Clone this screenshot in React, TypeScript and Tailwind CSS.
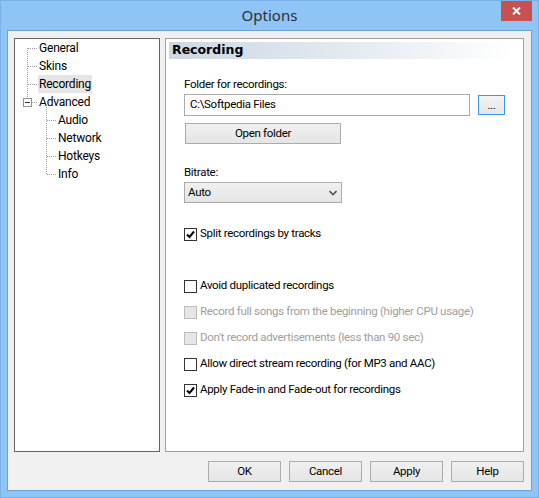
import React from 'react';

const ui = { fontFamily: 'Roboto, "Noto Sans", sans-serif', letterSpacing: '-0.2px' };
const body = { fontSize: '11.5px', letterSpacing: '-0.3px' };

const TreeLines = () => (
    <svg className="absolute left-0 top-0 pointer-events-none" width="144" height="160">
        <g stroke="#a0a0a0" strokeWidth="1" strokeDasharray="1 1" fill="none">
            <line x1="12.5" y1="9" x2="12.5" y2="59" />
            <line x1="13" y1="9.5" x2="23" y2="9.5" />
            <line x1="13" y1="27.5" x2="23" y2="27.5" />
            <line x1="13" y1="45.5" x2="23" y2="45.5" />
            <line x1="17" y1="63.5" x2="23" y2="63.5" />
            <line x1="31.5" y1="68" x2="31.5" y2="135" />
            <line x1="32" y1="81.5" x2="42" y2="81.5" />
            <line x1="32" y1="99.5" x2="42" y2="99.5" />
            <line x1="32" y1="117.5" x2="42" y2="117.5" />
            <line x1="32" y1="135.5" x2="42" y2="135.5" />
        </g>
        <rect x="8.5" y="59.5" width="8" height="8" fill="#fff" stroke="#919191" />
        <line x1="10" y1="63.5" x2="15" y2="63.5" stroke="#333" />
    </svg>
);

const TreeItem = ({ label, sub, selected }: { label: string; sub?: boolean; selected?: boolean }) => (
    <div className={`h-[18px] flex items-center ${sub ? 'pl-[42px]' : 'pl-[23px]'}`}>
        <span className={`px-[1px] h-[18px] leading-[18px] ${selected ? 'bg-[#e5e5e5]' : ''}`}>{label}</span>
    </div>
);

const Check = ({ checked, disabled, label }: { checked?: boolean; disabled?: boolean; label: string }) => (
    <div className="h-[26px] flex items-center">
        <div
            className={`w-[13px] h-[13px] border flex items-center justify-center ${
                disabled ? 'border-[#bcbcbc] bg-[#e6e6e6]' : 'border-[#333333] bg-white'
            }`}
        >
            {checked && (
                <svg width="9" height="9" viewBox="0 0 9 9">
                    <path d="M1 4.5 L3.5 7 L8 1.5" stroke="#000" strokeWidth="2" fill="none" />
                </svg>
            )}
        </div>
        <span className={`ml-[3px] ${disabled ? 'text-[#a0a0a0]' : 'text-black'}`}>{label}</span>
    </div>
);

const Btn = ({ label, className }: { label: string; className?: string }) => (
    <button
        className={`h-[21px] border border-[#acacac] bg-gradient-to-b from-[#f0f0f0] to-[#e5e5e5] text-black leading-none ${className ?? ''}`}
        style={body}
    >
        {label}
    </button>
);

export default function App() {
    return (
        <div className="w-[539px] h-[498px] bg-[#8ec5f6] border border-[#79b0e6] flex flex-col text-[12px] text-black select-none" style={ui}>
            <div className="h-[29px] relative flex items-center justify-center shrink-0">
                <span className="text-[15px] text-[#2f2f2f] -mt-[1px]" style={{ fontFamily: '"Noto Sans", sans-serif', letterSpacing: 0 }}>
                    Options
                </span>
                <div className="absolute right-[6px] top-0 w-[31px] h-[20px] bg-[#c75050] flex items-center justify-center">
                    <svg width="9" height="8" viewBox="0 0 9 8">
                        <path d="M1 0.5 L8 7.5 M8 0.5 L1 7.5" stroke="#fff" strokeWidth="2" />
                    </svg>
                </div>
            </div>

            <div className="flex-1 mx-[6px] mb-[6px] border border-[#6ea2d6] bg-[#f0f0f0] flex flex-col px-[6px] pt-[7px] pb-[8px]">
                <div className="flex gap-[5px] h-[414px]">
                    <div className="w-[146px] border border-[#646464] bg-white relative">
                        <TreeLines />
                        <TreeItem label="General" />
                        <TreeItem label="Skins" />
                        <TreeItem label="Recording" selected />
                        <TreeItem label="Advanced" />
                        <TreeItem label="Audio" sub />
                        <TreeItem label="Network" sub />
                        <TreeItem label="Hotkeys" sub />
                        <TreeItem label="Info" sub />
                    </div>

                    <div className="w-[359px] border border-[#a0a0a0] bg-white relative">
                        <div className="mx-[3px] mt-[3px] h-[17px] bg-gradient-to-r from-[#cbd8e4] via-[#e3e9ef] to-white w-[344px] flex items-center pl-[3px]">
                            <span className="font-bold" style={{ fontFamily: '"DejaVu Sans", sans-serif', fontSize: '12.5px', letterSpacing: 0 }}>
                                Recording
                            </span>
                        </div>

                        <div className="pl-[18px] pt-[17px] flex flex-col" style={body}>
                            <div className="h-[16px] leading-[16px]">Folder for recordings:</div>
                            <div className="flex items-center mt-[2px]">
                                <div className="w-[286px] h-[22px] border border-[#ababab] flex items-center pl-[5px]">
                                    C:\Softpedia Files
                                </div>
                                <button className="ml-[8px] w-[27px] h-[20px] border border-[#3399ff] bg-gradient-to-b from-[#f4f4f4] to-[#e6e6e6] leading-none pt-[2px]">
                                    ...
                                </button>
                            </div>
                            <Btn label="Open folder" className="w-[156px] ml-[1px] mt-[7px] h-[20px]" />

                            <div className="h-[16px] leading-[16px] mt-[20px]">Bitrate:</div>
                            <div className="mt-[2px] w-[158px] h-[21px] border border-[#acacac] bg-gradient-to-b from-[#f0f0f0] to-[#e5e5e5] flex items-center justify-between pl-[3px] pr-[4px]">
                                <span>Auto</span>
                                <svg width="8" height="6" viewBox="0 0 8 6">
                                    <path d="M0.5 1 L4 4.5 L7.5 1" stroke="#555" strokeWidth="1.6" fill="none" />
                                </svg>
                            </div>

                            <div className="mt-[18px]">
                                <Check checked label="Split recordings by tracks" />
                            </div>
                            <div className="mt-[26px] flex flex-col">
                                <Check label="Avoid duplicated recordings" />
                                <Check disabled label="Record full songs from the beginning (higher CPU usage)" />
                                <Check disabled label="Don't record advertisements (less than 90 sec)" />
                                <Check label="Allow direct stream recording (for MP3 and AAC)" />
                                <Check checked label="Apply Fade-in and Fade-out for recordings" />
                            </div>
                        </div>
                    </div>
                </div>

                <div className="flex justify-end gap-[8px] mt-[9px] pr-[1px]">
                    <Btn label="OK" className="w-[73px]" />
                    <Btn label="Cancel" className="w-[73px]" />
                    <Btn label="Apply" className="w-[73px]" />
                    <Btn label="Help" className="w-[73px]" />
                </div>
            </div>
        </div>
    );
}
